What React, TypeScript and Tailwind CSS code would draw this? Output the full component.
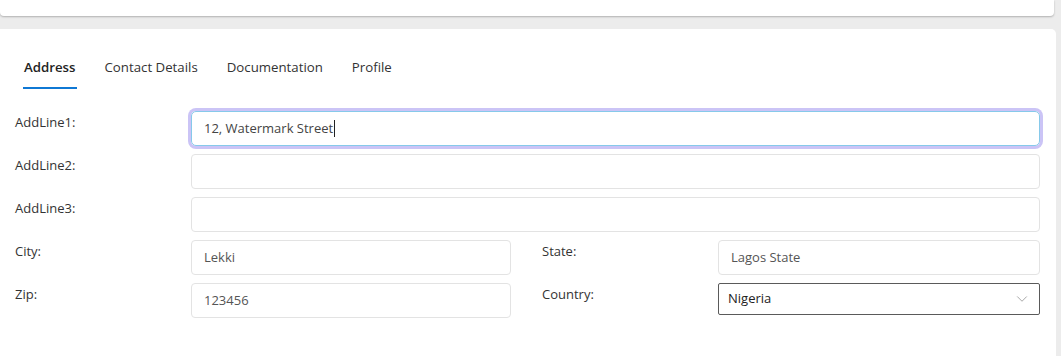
import React from "react";
import { ChevronDown } from "lucide-react";

const tabs = ["Address", "Contact Details", "Documentation", "Profile"];

const Label = ({ children }: { children: React.ReactNode }) => (
  <div className="w-[176px] shrink-0 pt-[2px] text-[13px] text-[#333]">{children}</div>
);

const Field = ({ value, focused }: { value?: string; focused?: boolean }) => (
  <div
    className={
      focused
        ? "flex h-[35px] flex-1 items-center rounded-[5px] border border-[#86c9ea] px-3 text-[13px] text-[#444] ring-[3px] ring-[#cbc4f6]"
        : "flex h-[35px] flex-1 items-center rounded-[4px] border border-[#e3e3e3] px-3 text-[13px] text-[#555]"
    }
  >
    {value}
    {focused && <span className="ml-px h-[17px] w-px bg-[#222]" />}
  </div>
);

export default function App() {
  return (
    <div
      className="h-[356px] overflow-hidden bg-[#ececec] pr-[5px]"
      style={{ fontFamily: '"Open Sans", "Noto Sans", sans-serif' }}
    >
      <div className="mr-[2px] h-[16px] rounded-b-[4px] bg-white shadow-[0_1px_2px_rgba(0,0,0,0.25)]" />
      <div className="mt-[13px] h-[400px] rounded-tr-[5px] bg-white pl-[15px] pr-[16px]">
        <div className="flex gap-[29px] pl-[9px] pt-[28px]">
          {tabs.map((t, i) => (
            <div key={t} className="relative pb-[12px] text-[13.25px] leading-[20px]">
              <span className={i === 0 ? "font-semibold text-[#222]" : "text-[#333]"}>{t}</span>
              {i === 0 && (
                <div className="absolute bottom-0 -left-px -right-px h-[2px] bg-[#0f78d4]" />
              )}
            </div>
          ))}
        </div>
        <div className="mt-[22px] flex flex-col gap-[8px]">
          <div className="flex">
            <Label>AddLine1:</Label>
            <Field value="12, Watermark Street" focused />
          </div>
          <div className="flex">
            <Label>AddLine2:</Label>
            <Field />
          </div>
          <div className="flex">
            <Label>AddLine3:</Label>
            <Field />
          </div>
          <div className="flex gap-[31px]">
            <div className="flex w-[496px]">
              <Label>City:</Label>
              <Field value="Lekki" />
            </div>
            <div className="flex flex-1">
              <Label>State:</Label>
              <Field value="Lagos State" />
            </div>
          </div>
          <div className="flex gap-[31px]">
            <div className="flex w-[496px]">
              <Label>Zip:</Label>
              <Field value="123456" />
            </div>
            <div className="flex flex-1">
              <Label>Country:</Label>
              <div className="flex h-[32px] flex-1 items-center justify-between rounded-[2px] border border-[#5a5a5a] pl-[9px] pr-[8px] text-[13px] text-[#222]">
                Nigeria
                <ChevronDown className="h-[18px] w-[18px] text-[#8a8a8a]" strokeWidth={1} />
              </div>
            </div>
          </div>
        </div>
      </div>
    </div>
  );
}
